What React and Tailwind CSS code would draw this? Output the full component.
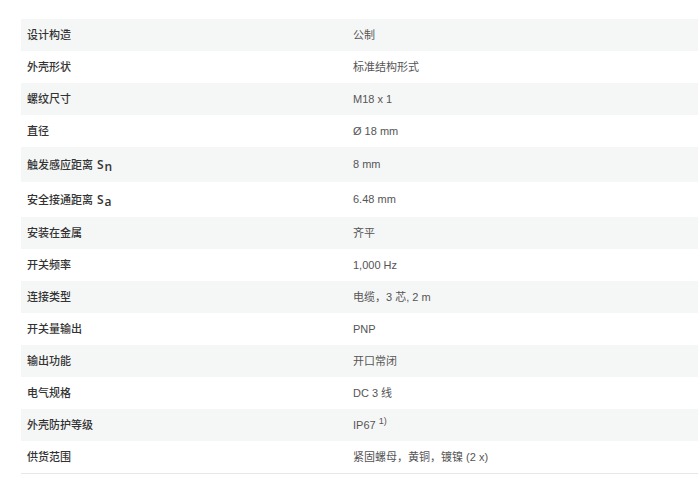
const rows = [
  { label: '设计构造', value: '公制' },
  { label: '外壳形状', value: '标准结构形式' },
  { label: '螺纹尺寸', value: 'M18 x 1' },
  { label: '直径', value: 'Ø 18 mm' },
  { label: '触发感应距离', sub: 'n', value: '8 mm' },
  { label: '安全接通距离', sub: 'a', value: '6.48 mm' },
  { label: '安装在金属', value: '齐平' },
  { label: '开关频率', value: '1,000 Hz' },
  { label: '连接类型', value: '电缆，3 芯, 2 m' },
  { label: '开关量输出', value: 'PNP' },
  { label: '输出功能', value: '开口常闭' },
  { label: '电气规格', value: 'DC 3 线' },
  { label: '外壳防护等级', value: 'IP67', note: '1)' },
  { label: '供货范围', value: '紧固螺母，黄铜，镀镍 (2 x)' },
];

export default function App() {
  return (
    <div
      className="w-[698px] h-[487px] bg-white overflow-hidden pt-[19px] pl-[21px]"
      style={{ fontFamily: '"Liberation Sans", "Noto Sans CJK SC", sans-serif' }}
    >
      <div className="w-[700px] border-b border-[#e6e8e8]">
        {rows.map((r, i) => (
          <div
            key={r.label}
            className={
              'flex items-center text-[11px] ' +
              (r.sub ? 'h-[35px]' : 'h-[32px]') +
              (i % 2 === 0 ? ' bg-[#f5f7f7]' : ' bg-white')
            }
          >
            <div className="w-[326px] pl-[6px] font-medium text-[#333] flex items-baseline">
              <span>{r.label}</span>
              {r.sub && (
                <span className="ml-[4px] text-[12px] font-semibold" style={{ fontFamily: '"Open Sans", sans-serif' }}>
                  S<sub className="text-[12px] relative top-[2px] ml-[1px]">{r.sub}</sub>
                </span>
              )}
            </div>
            <div className="flex-1 pl-[6px] text-[#555]">
              {r.value}
              {r.note && <sup className="ml-[3px] text-[9px]">{r.note}</sup>}
            </div>
          </div>
        ))}
      </div>
    </div>
  );
}
